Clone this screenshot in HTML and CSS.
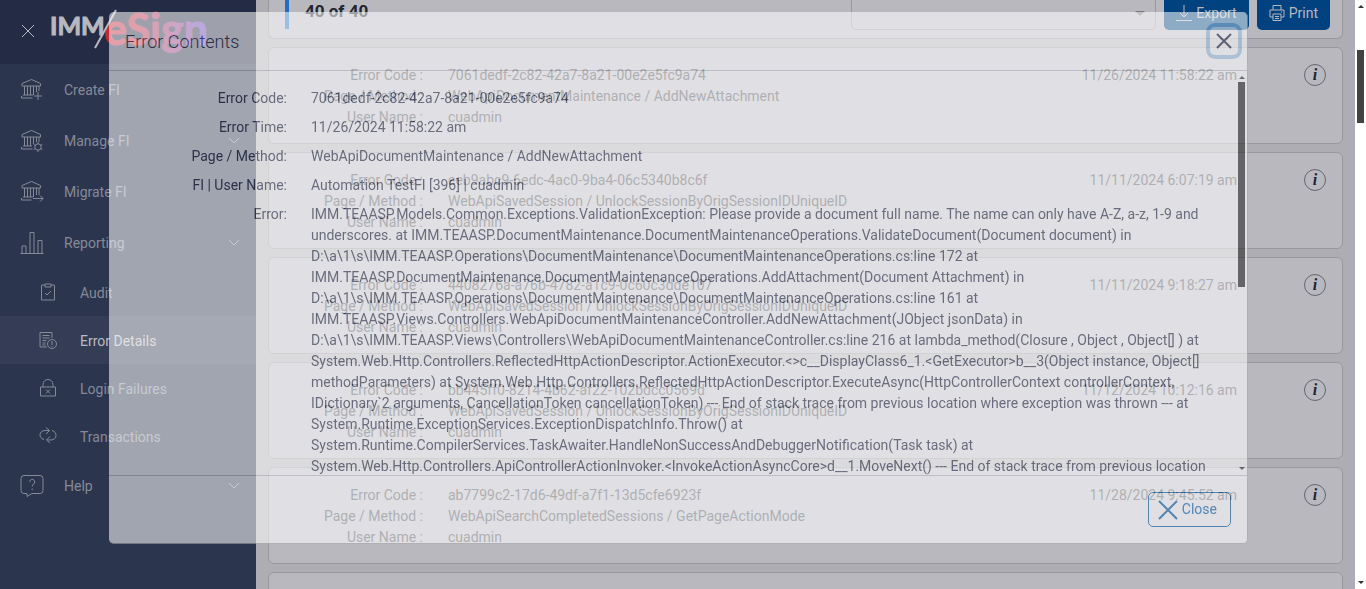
FILE: index.html
```html
<!DOCTYPE html>
<html lang="en">
<head>
    <meta charset="UTF-8">
    <meta name="viewport" content="width=device-width, initial-scale=1.0">
    <title>IMM eSign - Error Details</title>
    <link rel="stylesheet" href="styles.css">
</head>
<body>
    <div class="app">
        <aside class="sidebar">
            <div class="brand">
                <button type="button" class="menu-toggle" aria-label="Close menu">
                    <svg width="14" height="14" viewBox="0 0 14 14"><path d="M1 1l12 12M13 1L1 13"/></svg>
                </button>
                <svg class="logo" width="164" height="60" viewBox="0 0 164 60">
                    <defs>
                        <linearGradient id="brandGradient" gradientUnits="userSpaceOnUse" x1="56" y1="0" x2="160" y2="0">
                            <stop offset="0" stop-color="#c52a35"/>
                            <stop offset="0.4" stop-color="#b02a4b"/>
                            <stop offset="0.7" stop-color="#8f3583"/>
                            <stop offset="1" stop-color="#5740b8"/>
                        </linearGradient>
                    </defs>
                    <text class="logo-imm" x="2" y="35">IMM</text>
                    <text class="logo-esign" x="56" y="45">eSign</text>
                    <path class="logo-slash" d="M68 10L47 48"/>
                </svg>
            </div>
            <nav class="nav">
                <a href="#" class="nav-item">
                    <svg class="icon" viewBox="0 0 24 24"><path d="M2 8V5.500L11.500 1.500L20.500 5.500V8H2zM4.500 8v9M7.500 8v9M10.500 8v9M13.500 8v9M16.500 8v6M19 8v5M3 17h10M1.500 20h11M1.500 18v2M18 14v8M14 18h8"/></svg>
                    <span>Create FI</span>
                </a>
                <a href="#" class="nav-item">
                    <svg class="icon" viewBox="0 0 24 24"><path d="M2 8V5.500L11.500 1.500L20.500 5.500V8H2zM4.500 8v9M7.500 8v9M10.500 8v9M13.500 8v7M16.500 8v5M19 8v5M3 17h9M1.500 20h11M1.500 18v2"/><circle cx="18" cy="18" r="3.200"/><path d="M18 13v2M18 21v2M13.700 15.500l1.700 1M20.600 19.500l1.700 1M13.700 20.500l1.700-1M20.600 16.500l1.700-1"/></svg>
                    <span>Manage FI</span>
                    <svg class="chevron" viewBox="0 0 12 8"><path d="M1 1l5 5l5-5"/></svg>
                </a>
                <a href="#" class="nav-item">
                    <svg class="icon" viewBox="0 0 24 24"><path d="M2 8V5.500L11.500 1.500L20.500 5.500V8H2zM4.500 8v9M7.500 8v9M10.500 8v9M13.500 8v9M16.500 8v7M19 8v7M3 17h10M1.500 20h10M1.500 18v2M13 18.500h10M20 15.500l3 3l-3 3"/></svg>
                    <span>Migrate FI</span>
                </a>
                <a href="#" class="nav-item">
                    <svg class="icon" viewBox="0 0 24 24"><path d="M0.500 22.500h23M2 22v-7h4v7M10 22V1.500h4V22M18 22V9.500h4V22"/></svg>
                    <span>Reporting</span>
                    <svg class="chevron" viewBox="0 0 12 8"><path d="M1 1l5 5l5-5"/></svg>
                </a>
                <a href="#" class="nav-item sub">
                    <svg class="icon" viewBox="0 0 18 18"><path d="M6 2H2.500v15h13V2H12M6 1h6v3H6zM6 10l2 2l4-4"/></svg>
                    <span>Audit</span>
                </a>
                <a href="#" class="nav-item sub active">
                    <svg class="icon" viewBox="0 0 18 18"><path d="M13 7V1.500H1V16h7M3.500 4.500h7M3.500 7h7M3.500 9.500h4M3.500 12h3M3.500 14h3M13 10v4M13 15v1"/><circle cx="13" cy="13" r="4.500"/></svg>
                    <span>Error Details</span>
                </a>
                <a href="#" class="nav-item sub">
                    <svg class="icon" viewBox="0 0 18 18"><path d="M1.500 8h15v9h-15zM4 8V5.500a5 5 0 0 1 10 0V8M7 10.500l4 4M11 10.500l-4 4"/></svg>
                    <span>Login Failures</span>
                </a>
                <a href="#" class="nav-item sub">
                    <svg class="icon" viewBox="0 0 18 18"><path d="M5 12.500C-1 11 0 3.500 6 3.500h4M7 0.500l3.500 3L7 7M13 3.500c6 1.500 5 9.500-1 9.500H8M11 9.500L7.500 13l3.500 3"/></svg>
                    <span>Transactions</span>
                </a>
                <a href="#" class="nav-item">
                    <svg class="icon" viewBox="0 0 24 24"><path d="M4 1.500h16a3 3 0 0 1 3 3v12a3 3 0 0 1-3 3H12L7 22.500v-3H4a3 3 0 0 1-3-3v-12a3 3 0 0 1 3-3zM9.700 8c0-3.500 5-3.500 5 0c0 2-2.500 2-2.500 4.500M12.200 14.500v1.500"/></svg>
                    <span>Help</span>
                    <svg class="chevron" viewBox="0 0 12 8"><path d="M1 1l5 5l5-5"/></svg>
                </a>
            </nav>
        </aside>

        <main class="content">
            <section class="toolbar">
                <h2 class="count">40 of 40</h2>
                <div class="filter-box">
                    <select class="filter" aria-label="Filter"><option></option></select>
                </div>
                <button type="button" class="btn-primary">
                    <svg width="16" height="18" viewBox="0 0 16 18"><path d="M8 1v12M4 9l4 4l4-4M0 16.500h16"/></svg>
                    Export
                </button>
                <button type="button" class="btn-primary">
                    <svg width="16" height="18" viewBox="0 0 16 18"><path d="M4 6V1.500h8V6M4 13H1V6h14v7h-3M4 10h8v6.500H4zM6 12.500h4M6 14.500h4M12 8h1"/></svg>
                    Print
                </button>
            </section>

            <article class="card">
                <dl class="card-data">
                    <dt>Error Code :</dt><dd>7061dedf-2c82-42a7-8a21-00e2e5fc9a74</dd>
                    <dt>Page / Method :</dt><dd>WebApiDocumentMaintenance / AddNewAttachment</dd>
                    <dt>User Name :</dt><dd>cuadmin</dd>
                </dl>
                <time>11/26/2024 11:58:22 am</time>
                <button type="button" class="info">i</button>
            </article>
            <article class="card">
                <dl class="card-data">
                    <dt>Error Code :</dt><dd>eeb9abc9-6edc-4ac0-9ba4-06c5340b8c6f</dd>
                    <dt>Page / Method :</dt><dd>WebApiSavedSession / UnlockSessionByOrigSessionIDUniqueID</dd>
                    <dt>User Name :</dt><dd>cuadmin</dd>
                </dl>
                <time>11/11/2024 6:07:19 am</time>
                <button type="button" class="info">i</button>
            </article>
            <article class="card">
                <dl class="card-data">
                    <dt>Error Code :</dt><dd>4408276a-a76b-4782-a1c9-0c60c3dde107</dd>
                    <dt>Page / Method :</dt><dd>WebApiSavedSession / UnlockSessionByOrigSessionIDUniqueID</dd>
                    <dt>User Name :</dt><dd>cuadmin</dd>
                </dl>
                <time>11/11/2024 9:18:27 am</time>
                <button type="button" class="info">i</button>
            </article>
            <article class="card">
                <dl class="card-data">
                    <dt>Error Code :</dt><dd>bb445ff0-8214-4b62-af22-102bdcc0569d</dd>
                    <dt>Page / Method :</dt><dd>WebApiSavedSession / UnlockSessionByOrigSessionIDUniqueID</dd>
                    <dt>User Name :</dt><dd>cuadmin</dd>
                </dl>
                <time>11/12/2024 10:12:16 am</time>
                <button type="button" class="info">i</button>
            </article>
            <article class="card">
                <dl class="card-data">
                    <dt>Error Code :</dt><dd>ab7799c2-17d6-49df-a7f1-13d5cfe6923f</dd>
                    <dt>Page / Method :</dt><dd>WebApiSearchCompletedSessions / GetPageActionMode</dd>
                    <dt>User Name :</dt><dd>cuadmin</dd>
                </dl>
                <time>11/28/2024 9:45:52 am</time>
                <button type="button" class="info">i</button>
            </article>
            <article class="card"></article>
        </main>

        <div class="scrollbar page-scrollbar">
            <span class="arrow up"></span>
            <span class="thumb"></span>
            <span class="arrow down"></span>
        </div>
    </div>

    <div class="modal" role="dialog" aria-labelledby="modalTitle">
        <header class="modal-header">
            <h1 id="modalTitle">Error Contents</h1>
            <button type="button" class="modal-x" aria-label="Close dialog">
                <svg width="16" height="16" viewBox="0 0 16 16"><path d="M1 1l14 14M15 1L1 15"/></svg>
            </button>
        </header>
        <div class="modal-body">
            <dl class="details">
                <dt>Error Code:</dt><dd>7061dedf-2c82-42a7-8a21-00e2e5fc9a74</dd>
                <dt>Error Time:</dt><dd>11/26/2024 11:58:22 am</dd>
                <dt>Page / Method:</dt><dd>WebApiDocumentMaintenance / AddNewAttachment</dd>
                <dt>FI | User Name:</dt><dd>Automation TestFI [396] | cuadmin</dd>
                <dt>Error:</dt>
                <dd>IMM.TEAASP.Models.Common.Exceptions.ValidationException: Please provide a document full name. The name can only have A-Z, a-z, 1-9 and<br>
                    underscores. at IMM.TEAASP.DocumentMaintenance.DocumentMaintenanceOperations.ValidateDocument(Document document) in<br>
                    D:\a\1\s\IMM.TEAASP.Operations\DocumentMaintenance\DocumentMaintenanceOperations.cs:line 172 at<br>
                    IMM.TEAASP.DocumentMaintenance.DocumentMaintenanceOperations.AddAttachment(Document Attachment) in<br>
                    D:\a\1\s\IMM.TEAASP.Operations\DocumentMaintenance\DocumentMaintenanceOperations.cs:line 161 at<br>
                    IMM.TEAASP.Views.Controllers.WebApiDocumentMaintenanceController.AddNewAttachment(JObject jsonData) in<br>
                    D:\a\1\s\IMM.TEAASP.Views\Controllers\WebApiDocumentMaintenanceController.cs:line 216 at lambda_method(Closure , Object , Object[] ) at<br>
                    System.Web.Http.Controllers.ReflectedHttpActionDescriptor.ActionExecutor.&lt;&gt;c__DisplayClass6_1.&lt;GetExecutor&gt;b__3(Object instance, Object[]<br>
                    methodParameters) at System.Web.Http.Controllers.ReflectedHttpActionDescriptor.ExecuteAsync(HttpControllerContext controllerContext,<br>
                    IDictionary`2 arguments, CancellationToken cancellationToken) --- End of stack trace from previous location where exception was thrown --- at<br>
                    System.Runtime.ExceptionServices.ExceptionDispatchInfo.Throw() at<br>
                    System.Runtime.CompilerServices.TaskAwaiter.HandleNonSuccessAndDebuggerNotification(Task task) at<br>
                    System.Web.Http.Controllers.ApiControllerActionInvoker.&lt;InvokeActionAsyncCore&gt;d__1.MoveNext() --- End of stack trace from previous location</dd>
            </dl>
            <div class="scrollbar">
                <span class="arrow up"></span>
                <span class="thumb"></span>
                <span class="arrow down"></span>
            </div>
        </div>
        <footer class="modal-footer">
            <button type="button" class="btn-close">
                <svg width="20" height="20" viewBox="0 0 20 20"><path d="M1 1l18 18M19 1L1 19"/></svg>
                Close
            </button>
        </footer>
    </div>
</body>
</html>
```
FILE: styles.css
```css
* {
    box-sizing: border-box;
    margin: 0;
    padding: 0;
}

body {
    font-family: Roboto, sans-serif;
    font-size: 14px;
    line-height: 21px;
    color: #3c414f;
    overflow: hidden;
}

button,
select {
    font: inherit;
    cursor: pointer;
}

svg {
    fill: none;
    stroke: currentColor;
    flex: none;
}

.app {
    display: flex;
    height: 100vh;
    overflow: hidden;
    background-color: #aeadb4;
}

/* Sidebar */
.sidebar {
    width: 256px;
    flex: none;
    background-color: #2c354e;
}

.brand {
    display: flex;
    align-items: flex-start;
    height: 64px;
    padding-left: 20px;
    background-color: #242b44;
}

.menu-toggle {
    display: flex;
    margin-top: 23px;
    padding: 1px;
    border: none;
    background: none;
    color: #b9bbc3;
}

.logo {
    margin-left: 12px;
}

.logo text {
    font-family: Lato, sans-serif;
    font-weight: 700;
}

.logo .logo-imm {
    fill: #b8b8bf;
    stroke: #b8b8bf;
    font-size: 25px;
}

.logo .logo-esign {
    fill: url(#brandGradient);
    stroke: url(#brandGradient);
    font-size: 43px;
}

.logo-slash {
    stroke: #b8b8bf;
    stroke-width: 2;
}

.nav-item {
    display: flex;
    align-items: center;
    height: 51px;
    padding: 0 16px 0 20px;
    gap: 20px;
    color: #858a97;
    text-decoration: none;
}

.nav-item span {
    padding-top: 2px;
}

.nav-item .icon {
    width: 24px;
    height: 24px;
}

.nav-item.sub {
    height: 48px;
    padding-left: 39px;
    gap: 23px;
}

.nav-item.sub .icon {
    width: 18px;
    height: 18px;
}

.nav-item.active {
    background-color: #343d55;
}

.nav-item.active span {
    color: #b9bbc3;
}

.chevron {
    width: 12px;
    height: 8px;
    margin-left: auto;
}

/* Error list */
.content {
    flex: 1;
    display: flex;
    flex-direction: column;
    gap: 8px;
    padding: 0 12px;
    overflow: hidden;
}

.toolbar,
.card {
    flex: none;
    border: 1px solid #99989f;
    border-radius: 6px;
    background-color: #b9b8bf;
}

.toolbar {
    display: flex;
    align-items: flex-start;
    height: 39px;
    padding: 0 12px 0 16px;
    border-top: none;
    border-radius: 0 0 6px 6px;
}

.count {
    margin-right: auto;
    height: 29px;
    padding-left: 16px;
    border-left: 4px solid #1f6fc2;
    font-size: 17px;
    font-weight: 700;
    line-height: 22px;
    color: #20252f;
}

.filter-box {
    display: flex;
    position: relative;
    width: 305px;
    height: 30px;
    margin-right: 8px;
}

.filter-box::after {
    content: "";
    position: absolute;
    top: 11px;
    right: 11px;
    border: 5px solid transparent;
    border-top-color: #77777d;
    border-bottom: none;
}

.filter {
    width: 100%;
    border: 1px solid #99989f;
    border-top: none;
    border-radius: 0 0 5px 5px;
    appearance: none;
    background: none;
}

.btn-primary {
    display: flex;
    align-items: center;
    gap: 4px;
    height: 30px;
    padding: 0 12px 4px;
    border: none;
    border-radius: 0 0 5px 5px;
    background-color: #00427f;
    color: #b8b8bf;
}

.btn-primary + .btn-primary {
    margin-left: 8px;
}

.card {
    display: flex;
    align-items: flex-start;
    min-height: 97px;
    padding: 16px 16px 14px 0;
    color: #484b54;
}

.card-data {
    display: grid;
    grid-template-columns: 154px 1fr;
    column-gap: 25px;
    flex: 1;
    padding-top: 1px;
}

.card time {
    padding-top: 1px;
}

.card dt,
.details dt {
    text-align: right;
}

.info {
    width: 22px;
    height: 22px;
    margin-left: 67px;
    border: 1px solid #66666e;
    border-radius: 50%;
    background: none;
    color: #20252f;
    font-family: "Liberation Serif", serif;
    font-size: 16px;
    font-style: italic;
    font-weight: 700;
    line-height: 20px;
}

/* Scrollbars */
.scrollbar {
    display: flex;
    flex-direction: column;
    align-items: center;
    width: 11px;
    flex: none;
    padding: 5px 0;
}

.page-scrollbar {
    background-color: #fff;
}

.arrow {
    border: 3px solid transparent;
}

.arrow.up {
    border-top: none;
    border-bottom-color: #333;
}

.arrow.down {
    margin-top: auto;
    border-bottom: none;
    border-top-color: #333;
}

.thumb {
    width: 7px;
    height: 205px;
    margin-top: 3px;
    background-color: #232323;
}

.page-scrollbar .thumb {
    height: 73px;
    margin-top: 42px;
    background-color: #424242;
}

/* Modal, caught while fading in */
.modal {
    position: fixed;
    top: 12px;
    left: 109px;
    right: 118px;
    display: flex;
    flex-direction: column;
    border: 1px solid #a9a9ad;
    border-left: none;
    border-top: none;
    border-radius: 5px;
    background-color: #fff;
    color: #2a3148;
    opacity: 0.56;
}

.modal-header {
    display: flex;
    align-items: center;
    justify-content: space-between;
    height: 59px;
    padding: 0 9px 0 16px;
    border-bottom: 1px solid #c4c4cc;
}

.modal-header h1 {
    font-size: 18px;
    font-weight: 300;
}

.modal-x {
    display: flex;
    padding: 6px;
    border: none;
    border-radius: 5px;
    box-shadow: 0 0 0 4px #a4c8e4;
    background: none;
    color: #1c2540;
}

.modal-x svg {
    stroke-width: 2;
}

.modal-body {
    display: flex;
    height: 405px;
    border-bottom: 1px solid #c4c4cc;
}

.details {
    flex: 1;
    display: grid;
    grid-template-columns: 178px 1fr;
    gap: 8px 24px;
    align-content: start;
    padding-top: 17px;
    white-space: nowrap;
}

.modal-footer {
    display: flex;
    justify-content: flex-end;
    padding: 16px;
}

.btn-close {
    display: flex;
    align-items: center;
    gap: 4px;
    height: 35px;
    padding: 0 13px 0 9px;
    border: 1px solid #0060ab;
    border-radius: 5px;
    background: none;
    color: #0060ab;
}

.btn-close svg {
    stroke-width: 2;
}
```
